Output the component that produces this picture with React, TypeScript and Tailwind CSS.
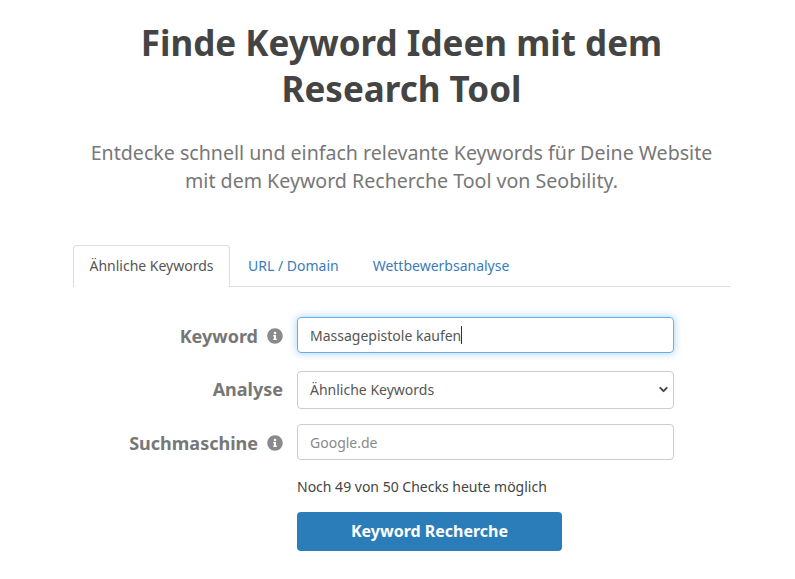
import React from 'react';
import { ChevronDown } from 'lucide-react';

const InfoIcon = () => (
  <svg viewBox="0 0 512 512" className="h-[16px] w-[16px] shrink-0 fill-[#8a8a8a]">
    <path d="M256 8C119 8 8 119 8 256s111 248 248 248 248-111 248-248S393 8 256 8zm0 110c23 0 42 19 42 42s-19 42-42 42-42-19-42-42 19-42 42-42zm56 254c0 7-5 12-12 12h-88c-7 0-12-5-12-12v-24c0-7 5-12 12-12h12v-64h-12c-7 0-12-5-12-12v-24c0-7 5-12 12-12h64c7 0 12 5 12 12v100h12c7 0 12 5 12 12v24z" />
  </svg>
);

const FieldRow = ({ label, info, children, className, labelClass }: { label: string; info?: boolean; children: React.ReactNode; className?: string; labelClass?: string }) => (
  <div className={`flex items-center ${className ?? ''}`}>
    <div className={`flex w-[210px] items-center justify-end gap-[9px] text-[18px] leading-[26px] font-bold text-[#777777] ${labelClass ?? ''}`}>
      <span>{label}</span>
      {info && <InfoIcon />}
    </div>
    <div className="ml-[14px] w-[377px]">{children}</div>
  </div>
);

export default function App() {
  return (
    <div className="h-[579px] w-[795px] overflow-hidden bg-white font-['Noto_Sans',sans-serif]">
      <div className="ml-[73px] w-[657px] pt-[20px]">
        <h1 className="mx-auto w-[560px] text-center text-[35px] leading-[46px] font-bold text-[#444444]">
          Finde Keyword Ideen mit dem Research Tool
        </h1>
        <p className="mt-[27px] text-center text-[19.6px] leading-[28px] text-[#777777]">
          Entdecke schnell und einfach relevante Keywords für Deine Website
          <br />
          mit dem Keyword Recherche Tool von Seobility.
        </p>

        <div className="mt-[50px] flex h-[42px] border-b border-[#dddddd] text-[14px]">
          <div className="-mb-px flex h-[42px] w-[157px] items-center justify-center rounded-t border border-b-0 border-[#dddddd] bg-white pb-[2px] text-[#555555]">
            Ähnliche Keywords
          </div>
          <div className="flex items-center px-[18px] text-[#3a7cb8]">URL / Domain</div>
          <div className="flex items-center px-[16px] text-[#3a7cb8]">Wettbewerbsanalyse</div>
        </div>

        <div className="pt-[30px]">
          <FieldRow label="Keyword" info labelClass="pt-[2px]">
            <div className="flex h-[36px] items-center rounded border border-[#66afe9] px-[12px] text-[14px] text-[#555555] shadow-[0_0_8px_rgba(102,175,233,0.6)]">
              Massagepistole kaufen
              <span className="h-[18px] w-px bg-[#333333]" />
            </div>
          </FieldRow>
          <FieldRow label="Analyse" className="mt-[18px]" labelClass="pb-[2px]">
            <div className="flex h-[38px] items-center justify-between rounded border border-[#cccccc] pr-[3px] pb-[2px] pl-[12px] text-[14px] text-[#555555]">
              Ähnliche Keywords
              <ChevronDown className="h-[13px] w-[13px] text-[#444444]" strokeWidth={3.5} />
            </div>
          </FieldRow>
          <FieldRow label="Suchmaschine" info className="mt-[15px]" labelClass="pt-[2px]">
            <div className="flex h-[36px] items-center rounded border border-[#cccccc] px-[12px] text-[14px] text-[#8a8a8a]">
              Google.de
            </div>
          </FieldRow>
          <div className="mt-[17px] ml-[210px] pl-[14px]">
            <p className="text-[14px] leading-[20px] text-[#444444]">Noch 49 von 50 Checks heute möglich</p>
            <button className="mt-[15px] h-[39px] w-[265px] rounded bg-[#2b7dba] pb-[2px] text-[16px] font-bold text-white">
              Keyword Recherche
            </button>
          </div>
        </div>
      </div>
    </div>
  );
}
